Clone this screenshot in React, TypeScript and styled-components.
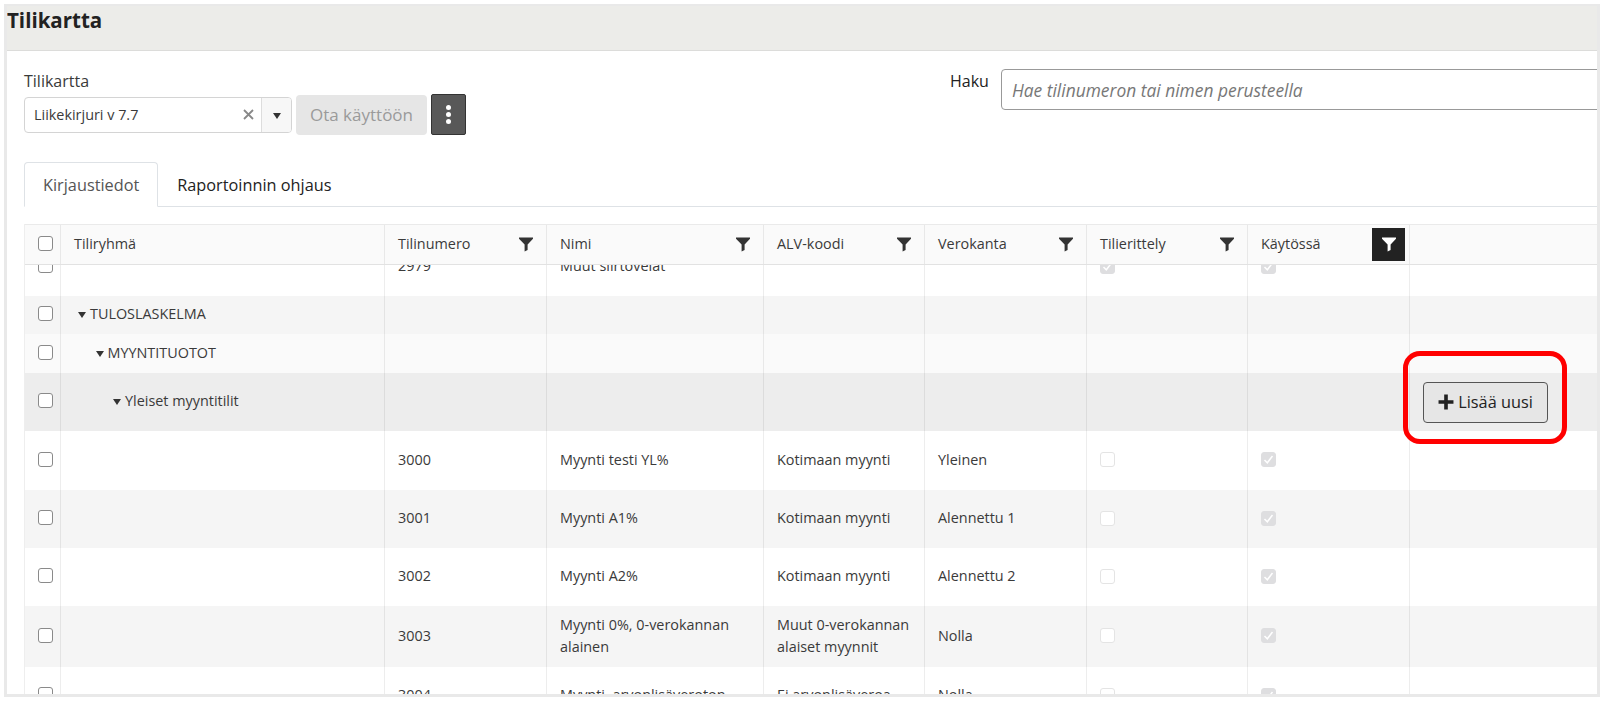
import styled, { createGlobalStyle } from 'styled-components'

const GlobalStyle = createGlobalStyle`
  html, body {
    margin: 0;
    background: #fff;
  }
  body {
    font-family: 'Open Sans', 'Noto Sans', sans-serif;
    color: #3a3a3a;
  }
`

const columns = '36px 324px 162px 217px 161px 162px 161px 162px 1fr'

type Tone = 'white' | 'soft' | 'light' | 'dark'

const toneColors: Record<Tone, string> = {
  white: '#ffffff',
  soft: '#f5f5f5',
  light: '#fafafa',
  dark: '#ededed',
}

interface AccountRow {
  number: string
  name: string
  vatCode: string
  taxRate: string
  tone: Tone
  height: number
}

const accounts: AccountRow[] = [
  { number: '3000', name: 'Myynti testi YL%', vatCode: 'Kotimaan myynti', taxRate: 'Yleinen', tone: 'white', height: 59 },
  { number: '3001', name: 'Myynti A1%', vatCode: 'Kotimaan myynti', taxRate: 'Alennettu 1', tone: 'soft', height: 58 },
  { number: '3002', name: 'Myynti A2%', vatCode: 'Kotimaan myynti', taxRate: 'Alennettu 2', tone: 'white', height: 58 },
  {
    number: '3003',
    name: 'Myynti 0%, 0-verokannan alainen',
    vatCode: 'Muut 0-verokannan alaiset myynnit',
    taxRate: 'Nolla',
    tone: 'soft',
    height: 61,
  },
  {
    number: '3004',
    name: 'Myynti, arvonlisäveroton',
    vatCode: 'Ei arvonlisäveroa',
    taxRate: 'Nolla',
    tone: 'white',
    height: 58,
  },
]

const headers = ['Tilinumero', 'Nimi', 'ALV-koodi', 'Verokanta', 'Tilierittely']

const FilterIcon = () => (
  <svg width="14" height="15" viewBox="0 0 14 15" fill="currentColor">
    <path d="M0 0.5 H14 V1.8 L8.6 7.6 V13 L5.6 14.6 V7.6 L0 1.8 Z" />
  </svg>
)

const Caret = styled.span`
  display: inline-block;
  width: 0;
  height: 0;
  border-left: 4.5px solid transparent;
  border-right: 4.5px solid transparent;
  border-top: 6px solid #333;
  margin-right: 4px;
  transform: translateY(1px);
`

const CheckIcon = () => (
  <svg width="11" height="11" viewBox="0 0 11 11" fill="none" stroke="#fff" strokeWidth="1.5">
    <path d="M1.5 6 L4.3 8.8 L9.5 2" />
  </svg>
)

const DisabledCheck = ({ checked }: { checked: boolean }) => (
  <DisabledBox $checked={checked}>{checked && <CheckIcon />}</DisabledBox>
)

const TreeRow = ({ label, level, tone, height }: { label: string; level: number; tone: Tone; height: number }) => (
  <Row $tone={tone} $height={height}>
    <CheckCell>
      <Check />
    </CheckCell>
    <TreeCell $level={level}>
      <Caret />
      {label}
    </TreeCell>
    <Cell />
    <Cell />
    <Cell />
    <Cell />
    <Cell />
    <Cell />
    {level === 2 ? (
      <ActionCell>
        <Highlight>
          <AddButton>
            <svg width="16" height="16" viewBox="0 0 15 15" fill="#222">
              <path d="M5.8 0.5 H9.2 V5.8 H14.5 V9.2 H9.2 V14.5 H5.8 V9.2 H0.5 V5.8 H5.8 Z" />
            </svg>
            Lisää uusi
          </AddButton>
        </Highlight>
      </ActionCell>
    ) : (
      <LastCell />
    )}
  </Row>
)

export default function App() {
  return (
    <>
      <GlobalStyle />
      <Page>
        <Frame>
          <TitleBar>
            <Title>Tilikartta</Title>
          </TitleBar>
          <Content>
            <Toolbar>
              <ChartGroup>
                <FieldLabel>Tilikartta</FieldLabel>
                <ChartControls>
                  <SelectBox>
                    <SelectValue>Liikekirjuri v 7.7</SelectValue>
                    <ClearIcon>
                      <svg width="11" height="11" viewBox="0 0 11 11" stroke="#888" strokeWidth="1.8">
                        <path d="M1 1 L10 10 M10 1 L1 10" />
                      </svg>
                    </ClearIcon>
                    <SelectArrow>
                      <Caret />
                    </SelectArrow>
                  </SelectBox>
                  <TakeIntoUseButton disabled>Ota käyttöön</TakeIntoUseButton>
                  <MenuButton>
                    <Dot />
                    <Dot />
                    <Dot />
                  </MenuButton>
                </ChartControls>
              </ChartGroup>
              <SearchGroup>
                <SearchLabel>Haku</SearchLabel>
                <SearchInput placeholder="Hae tilinumeron tai nimen perusteella" />
              </SearchGroup>
            </Toolbar>

            <Tabs>
              <Tab $active>Kirjaustiedot</Tab>
              <Tab>Raportoinnin ohjaus</Tab>
            </Tabs>

            <Table>
              <HeaderRow>
                <HeaderCheckCell>
                  <Check />
                </HeaderCheckCell>
                <HeaderCell>Tiliryhmä</HeaderCell>
                {headers.map((header) => (
                  <HeaderCell key={header}>
                    {header}
                    <FilterButton>
                      <FilterIcon />
                    </FilterButton>
                  </HeaderCell>
                ))}
                <HeaderCell>
                  Käytössä
                  <FilterButton $active>
                    <FilterIcon />
                  </FilterButton>
                </HeaderCell>
                <HeaderLast />
              </HeaderRow>

              <TableBody>
                <ScrolledRows>
                  <Row $tone="white" $height={58}>
                    <CheckCell>
                      <Check />
                    </CheckCell>
                    <Cell />
                    <Cell>2979</Cell>
                    <Cell>Muut siirtovelat</Cell>
                    <Cell />
                    <Cell />
                    <Cell>
                      <DisabledCheck checked />
                    </Cell>
                    <Cell>
                      <DisabledCheck checked />
                    </Cell>
                    <LastCell />
                  </Row>
                  <TreeRow label="TULOSLASKELMA" level={0} tone="soft" height={38} />
                  <TreeRow label="MYYNTITUOTOT" level={1} tone="light" height={39} />
                  <TreeRow label="Yleiset myyntitilit" level={2} tone="dark" height={58} />
                  {accounts.map((account) => (
                    <Row key={account.number} $tone={account.tone} $height={account.height}>
                      <CheckCell>
                        <Check />
                      </CheckCell>
                      <Cell />
                      <Cell>{account.number}</Cell>
                      <Cell>{account.name}</Cell>
                      <Cell>{account.vatCode}</Cell>
                      <Cell>{account.taxRate}</Cell>
                      <Cell>
                        <DisabledCheck checked={false} />
                      </Cell>
                      <Cell>
                        <DisabledCheck checked />
                      </Cell>
                      <LastCell />
                    </Row>
                  ))}
                </ScrolledRows>
              </TableBody>
            </Table>
          </Content>
        </Frame>
      </Page>
    </>
  )
}

const Page = styled.div`
  padding: 4px 6px 5px 4px;
`

const Frame = styled.div`
  box-sizing: border-box;
  display: flex;
  flex-direction: column;
  height: 693px;
  border: 3px solid #e9e9e9;
  border-top-width: 2px;
  overflow: hidden;
  background: #fff;
`

const TitleBar = styled.div`
  flex: none;
  box-sizing: border-box;
  height: 45px;
  background: #ecece9;
  border-bottom: 1px solid #dcdcda;
`

const Title = styled.h1`
  margin: 0;
  padding-top: 1px;
  font-size: 20.5px;
  line-height: 26px;
  font-weight: 700;
  color: #222;
`

const Content = styled.div`
  flex: 1;
  min-height: 0;
  display: flex;
  flex-direction: column;
  padding: 18px 0 0 17px;
`

const Toolbar = styled.div`
  flex: none;
  display: flex;
  height: 66px;
`

const ChartGroup = styled.div`
  flex: 0 0 926px;
  display: flex;
  flex-direction: column;
`

const FieldLabel = styled.div`
  font-size: 16px;
  line-height: 20px;
  margin-top: 2px;
  height: 23px;
`

const ChartControls = styled.div`
  display: flex;
  align-items: center;
  gap: 4px;
`

const SelectBox = styled.div`
  box-sizing: border-box;
  width: 268px;
  height: 36px;
  display: flex;
  align-items: center;
  border: 1px solid #d4d4d4;
  border-radius: 4px;
  overflow: hidden;
`

const SelectValue = styled.span`
  flex: 1;
  padding-left: 9px;
  font-size: 14.4px;
`

const ClearIcon = styled.span`
  display: flex;
  width: 14px;
  margin-right: 4px;
`

const SelectArrow = styled.span`
  flex: 0 0 29px;
  align-self: stretch;
  display: flex;
  align-items: center;
  justify-content: center;
  background: #f7f7f7;
  border-left: 1px solid #ddd;

  ${Caret} {
    margin: 0;
  }
`

const TakeIntoUseButton = styled.button`
  box-sizing: border-box;
  width: 131px;
  height: 40px;
  border: none;
  border-radius: 4px;
  background: #e6e6e6;
  color: #9a9a9a;
  font-family: inherit;
  font-size: 17px;
  padding: 0;
`

const MenuButton = styled.button`
  box-sizing: border-box;
  width: 35px;
  height: 41px;
  display: flex;
  flex-direction: column;
  align-items: center;
  justify-content: center;
  gap: 1.5px;
  padding: 0;
  background: #585858;
  border: 1px solid #333;
  border-radius: 2px;
`

const Dot = styled.span`
  width: 5.5px;
  height: 5.5px;
  border-radius: 50%;
  background: #fff;
`

const SearchGroup = styled.div`
  flex: 1;
  min-width: 0;
  display: flex;
  align-items: flex-start;
  gap: 12px;
`

const SearchLabel = styled.label`
  font-size: 16px;
  line-height: 20px;
  margin-top: 2px;
  color: #222;
`

const SearchInput = styled.input`
  flex: 1;
  min-width: 0;
  box-sizing: border-box;
  height: 41px;
  margin-right: -6px;
  padding: 0 10px;
  border: 1px solid #999;
  border-radius: 4px;
  font-family: inherit;
  font-size: 17.4px;
  outline: none;

  &::placeholder {
    font-style: italic;
    color: #777;
    opacity: 1;
  }
`

const Tabs = styled.div`
  flex: none;
  display: flex;
  height: 45px;
  margin-top: 27px;
  border-bottom: 1px solid #dee2e6;
  box-sizing: border-box;
`

const Tab = styled.div<{ $active?: boolean }>`
  box-sizing: border-box;
  height: 45px;
  padding: 0 18px;
  display: flex;
  align-items: center;
  font-size: 16.3px;
  color: ${({ $active }) => ($active ? '#555' : '#222')};
  background: ${({ $active }) => ($active ? '#fff' : 'transparent')};
  border: 1px solid ${({ $active }) => ($active ? '#dee2e6' : 'transparent')};
  border-bottom-color: ${({ $active }) => ($active ? '#fff' : 'transparent')};
  border-radius: 4px 4px 0 0;
`

const Table = styled.div`
  flex: 1;
  min-height: 0;
  display: flex;
  flex-direction: column;
  margin-top: 17px;
  border-left: 1px solid #eee;
  font-size: 14.4px;
`

const HeaderRow = styled.div`
  flex: none;
  box-sizing: border-box;
  display: grid;
  grid-template-columns: ${columns};
  height: 41px;
  background: #fafafa;
  border-top: 1px solid #eaeaea;
  border-bottom: 1px solid #e2e2e2;
`

const HeaderCell = styled.div`
  display: flex;
  align-items: center;
  justify-content: space-between;
  padding: 0 13px 3px;
  border-right: 1px solid #e8e8e8;
`

const HeaderCheckCell = styled(HeaderCell)`
  justify-content: flex-start;
  padding: 0 0 2px 13px;
`

const HeaderLast = styled.div``

const FilterButton = styled.span<{ $active?: boolean }>`
  flex: none;
  display: flex;
  align-items: center;
  justify-content: center;
  width: 33px;
  height: 33px;
  margin: 2px -9px 0 0;
  color: ${({ $active }) => ($active ? '#fff' : '#333')};
  background: ${({ $active }) => ($active ? '#222' : 'transparent')};
`

const TableBody = styled.div`
  flex: 1;
  min-height: 0;
  overflow: hidden;
`

/* the list is scrolled a bit down in the reference, so the first row is cut off */
const ScrolledRows = styled.div`
  margin-top: -27px;
`

const Row = styled.div<{ $tone: Tone; $height: number }>`
  display: grid;
  grid-template-columns: ${columns};
  height: ${({ $height }) => $height}px;
  background: ${({ $tone }) => toneColors[$tone]};
`

const Cell = styled.div`
  display: flex;
  align-items: center;
  padding: 0 12px 2px 13px;
  line-height: 22px;
  border-right: 1px solid rgba(0, 0, 0, 0.07);
`

const CheckCell = styled(Cell)`
  justify-content: flex-start;
  padding: 0 0 3px 13px;
`

const TreeCell = styled(Cell)<{ $level: number }>`
  padding-left: ${({ $level }) => 17 + $level * 17.5}px;
`

const LastCell = styled.div``

const ActionCell = styled.div`
  display: flex;
  align-items: center;
  padding-left: 13px;
`

const Highlight = styled.span`
  position: relative;
  display: inline-flex;

  &::after {
    content: '';
    position: absolute;
    inset: -31px -19px -21px -20px;
    border: 5px solid #ff0000;
    border-radius: 17px;
    pointer-events: none;
  }
`

const AddButton = styled.button`
  box-sizing: border-box;
  width: 125px;
  height: 41px;
  display: flex;
  align-items: center;
  justify-content: center;
  gap: 4px;
  padding: 0;
  background: #e6e6e6;
  border: 1px solid #555;
  border-radius: 4px;
  font-family: inherit;
  font-size: 16.3px;
  font-weight: 500;
  color: #222;
`

const Check = styled.span`
  flex: none;
  box-sizing: border-box;
  display: block;
  width: 15px;
  height: 15px;
  background: #fff;
  border: 1px solid #8a8a8a;
  border-radius: 3px;
`

const DisabledBox = styled.span<{ $checked: boolean }>`
  flex: none;
  box-sizing: border-box;
  display: flex;
  align-items: center;
  justify-content: center;
  width: 15px;
  height: 15px;
  background: ${({ $checked }) => ($checked ? '#dedee0' : '#fff')};
  border: 1px solid ${({ $checked }) => ($checked ? '#dedee0' : '#e4e4e4')};
  border-radius: 3px;
`
